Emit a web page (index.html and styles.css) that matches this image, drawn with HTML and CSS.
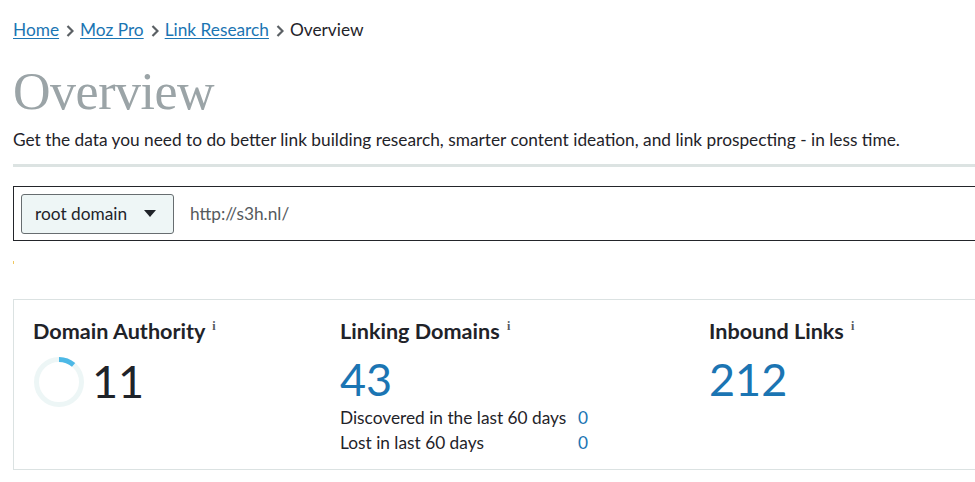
FILE: index.html
```html
<!DOCTYPE html>
<html>
<head>
<meta charset="utf-8">
<link rel="stylesheet" href="styles.css">
</head>
<body>
<div class="page">
  <nav class="crumbs">
    <a href="#">Home</a><svg class="sep" width="8" height="12" viewBox="0 0 8 12"><path d="M1.5 1 L6.5 6 L1.5 11" fill="none" stroke="#5b6064" stroke-width="2.2"/></svg><a href="#">Moz Pro</a><svg class="sep" width="8" height="12" viewBox="0 0 8 12"><path d="M1.5 1 L6.5 6 L1.5 11" fill="none" stroke="#5b6064" stroke-width="2.2"/></svg><a href="#">Link Research</a><svg class="sep" width="8" height="12" viewBox="0 0 8 12"><path d="M1.5 1 L6.5 6 L1.5 11" fill="none" stroke="#5b6064" stroke-width="2.2"/></svg><span class="cur">Overview</span>
  </nav>
  <h1 class="title">Overview</h1>
  <p class="desc">Get the data you need to do better link building research, smarter content ideation, and link prospecting - in less time.</p>
  <div class="rule"></div>
  <div class="search">
    <div class="select">root domain <span class="caret"></span></div>
    <div class="url">http://s3h.nl/</div>
  </div>
  <div class="dot"></div>
  <div class="card">
    <div class="metric m1">
      <div class="mtitle">Domain Authority <sup class="info">i</sup></div>
      <div class="darow">
        <svg class="donut" width="52" height="52" viewBox="0 0 52 52">
          <circle cx="26" cy="26" r="22.5" fill="none" stroke="#edf6f6" stroke-width="5"/>
          <path d="M26 3.5 A22.5 22.5 0 0 1 40.6 8.9" fill="none" stroke="#4cb8e6" stroke-width="5"/>
        </svg>
        <span class="num dark">11</span>
      </div>
    </div>
    <div class="metric m2">
      <div class="mtitle">Linking Domains <sup class="info">i</sup></div>
      <div class="num blue">43</div>
      <div class="sub"><span class="lbl">Discovered in the last 60 days</span><span class="val">0</span></div>
      <div class="sub"><span class="lbl">Lost in last 60 days</span><span class="val">0</span></div>
    </div>
    <div class="metric m3">
      <div class="mtitle">Inbound Links <sup class="info">i</sup></div>
      <div class="num blue">212</div>
    </div>
  </div>
</div>
</body>
</html>
```
FILE: styles.css
```css
html, body { margin: 0; padding: 0; overflow: hidden; background: #fff; }
body { font-family: Lato, "Open Sans", sans-serif; color: #1f2329; }
.page { width: 1100px; padding-left: 13px; }
.crumbs { padding-top: 19px; font-size: 17.3px; line-height: 22px; color: #1f2329; }
.crumbs a { color: #1b75b3; text-decoration: underline; text-underline-offset: 2px; }
.sep { margin: 0 6px 0 7px; vertical-align: -1px; }
.title { margin: 0; padding-top: 21px; font-family: "Liberation Serif", serif; font-weight: normal; font-size: 52px; line-height: 60px; color: #9ba4a7; letter-spacing: -0.5px; }
.desc { margin: 0; padding-top: 7px; font-size: 17.3px; line-height: 22px; }
.rule { height: 3px; background: #dce3e2; margin-top: 13px; }
.search { margin-top: 19px; border: 1px solid #23252a; height: 53px; display: flex; align-items: center; padding-left: 7px; }
.select { box-sizing: border-box; width: 153px; height: 40px; border: 1px solid #676d70; border-radius: 3px; background: #eef6f6; display: flex; align-items: center; padding-left: 13px; font-size: 17.3px; color: #1f2329; }
.caret { width: 0; height: 0; border-left: 6px solid transparent; border-right: 6px solid transparent; border-top: 7px solid #1f2329; margin-left: 17px; }
.url { margin-left: 16px; font-size: 17.3px; color: #555a5e; }
.dot { width: 1px; height: 3px; background: #f0c860; margin-top: 20px; }
.card { margin-top: 35px; border: 1px solid #dbe2e2; height: 171px; display: flex; padding-left: 19px; box-sizing: border-box; }
.metric { padding-top: 13px; }
.m1 { width: 307px; }
.m2 { width: 369px; }
.mtitle { font-size: 21.6px; font-weight: 700; line-height: 26px; color: #1f2329; }
.info { font-family: "Liberation Serif", serif; font-weight: 700; font-size: 12px; color: #555a5e; vertical-align: 9px; margin-left: 2px; }
.darow { display: flex; align-items: center; margin-top: 10px; }
.donut { margin-right: 7px; margin-top: 2px; }
.num { font-size: 45px; line-height: 52px; font-weight: 400; }
.m2 .num, .m3 .num { margin-top: 9px; }
.dark { color: #1f2329; }
.blue { color: #1b75b3; }
.sub { font-size: 17.3px; line-height: 25px; display: flex; }
.lbl { width: 238px; }
.val { color: #1b75b3; }
```
